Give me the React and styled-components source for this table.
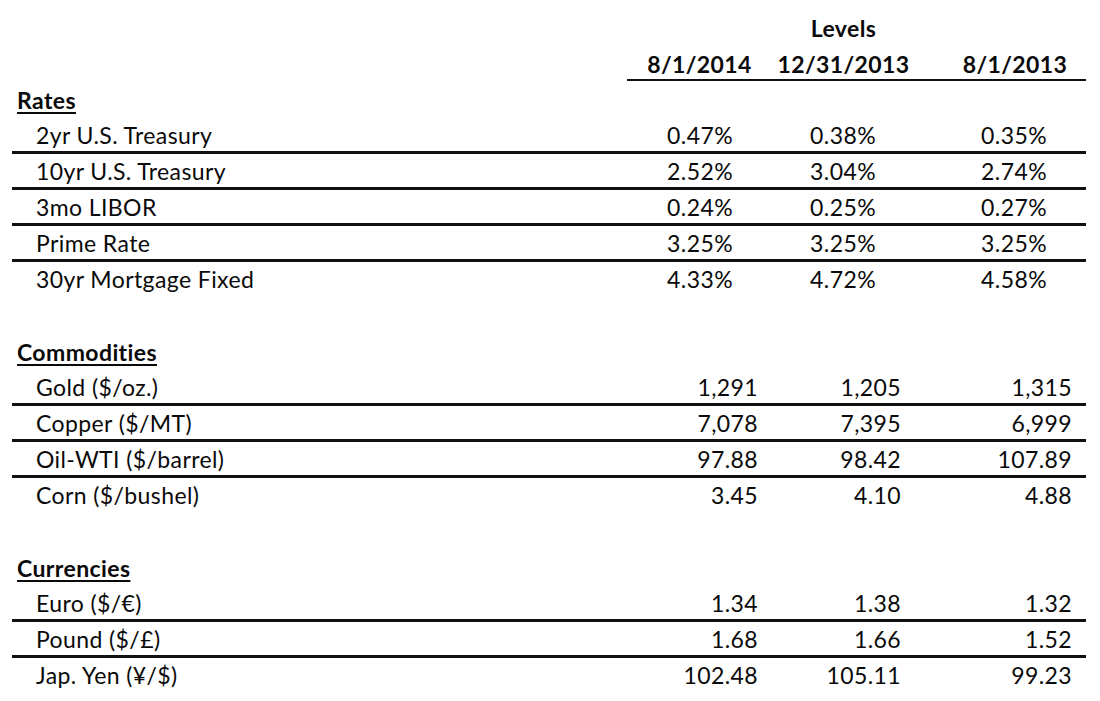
import React from "react";
import styled, { createGlobalStyle } from "styled-components";

const GlobalStyle = createGlobalStyle`
  html, body {
    margin: 0;
    padding: 0;
    background: #fff;
  }
  body {
    font-family: Lato, "Open Sans", "Liberation Sans", sans-serif;
    color: #0a0a0a;
  }
`;

const COLS = "615px 145px 143px 171px";

const Sheet = styled.div`
  width: 1074px;
  padding: 10px 0 0 12px;
  font-size: 23px;
  letter-spacing: 0.4px;
`;

const Head = styled.div`
  display: grid;
  grid-template-columns: ${COLS};
  margin-bottom: 1px;
`;

const LevelsCell = styled.div`
  grid-column: 3;
  height: 36px;
  line-height: 36px;
  text-align: center;
  font-weight: 700;
`;

const DateRow = styled.div`
  grid-column: 2 / 5;
  display: grid;
  grid-template-columns: 145px 143px 171px;
  border-bottom: 2px solid #111;
  height: 35px;
  box-sizing: border-box;
  padding-top: 3px;
`;

const DateCell = styled.div`
  line-height: 30px;
  text-align: center;
  font-weight: 700;
  padding-left: ${(p) => p.$shift || 0}px;
`;

const Row = styled.div`
  display: grid;
  grid-template-columns: ${COLS};
  height: 36px;
  box-sizing: border-box;
  border-bottom: ${(p) => (p.$line ? "3px solid #111" : "3px solid transparent")};
  line-height: 33px;
  padding-top: 1px;
`;

const SectionTitle = styled.div`
  height: 36px;
  line-height: 36px;
  padding-left: 5px;
  font-weight: 700;
  text-decoration: underline;
  text-decoration-thickness: 2px;
  text-underline-offset: 3px;
`;

const Spacer = styled.div`
  height: 36px;
`;

const Label = styled.div`
  padding-left: 24px;
  white-space: nowrap;
`;

const Value = styled.div`
  text-align: right;
  padding-right: ${(p) => (p.$pct ? 39 : 14)}px;
`;

const sections = [
  {
    title: "Rates",
    pct: true,
    rows: [
      ["2yr U.S. Treasury", "0.47%", "0.38%", "0.35%"],
      ["10yr U.S. Treasury", "2.52%", "3.04%", "2.74%"],
      ["3mo LIBOR", "0.24%", "0.25%", "0.27%"],
      ["Prime Rate", "3.25%", "3.25%", "3.25%"],
      ["30yr Mortgage Fixed", "4.33%", "4.72%", "4.58%"],
    ],
  },
  {
    title: "Commodities",
    rows: [
      ["Gold ($/oz.)", "1,291", "1,205", "1,315"],
      ["Copper ($/MT)", "7,078", "7,395", "6,999"],
      ["Oil-WTI ($/barrel)", "97.88", "98.42", "107.89"],
      ["Corn ($/bushel)", "3.45", "4.10", "4.88"],
    ],
  },
  {
    title: "Currencies",
    rows: [
      ["Euro ($/€)", "1.34", "1.38", "1.32"],
      ["Pound ($/£)", "1.68", "1.66", "1.52"],
      ["Jap. Yen (¥/$)", "102.48", "105.11", "99.23"],
    ],
  },
];

export default function App() {
  return (
    <>
      <GlobalStyle />
      <Sheet>
        <Head>
          <LevelsCell>Levels</LevelsCell>
          <DateRow>
            <DateCell>8/1/2014</DateCell>
            <DateCell>12/31/2013</DateCell>
            <DateCell $shift={29}>8/1/2013</DateCell>
          </DateRow>
        </Head>
        {sections.map((s, si) => (
          <React.Fragment key={s.title}>
            {si > 0 && <Spacer />}
            <SectionTitle>{s.title}</SectionTitle>
            {s.rows.map((r, i) => (
              <Row key={r[0]} $line={i < s.rows.length - 1}>
                <Label>{r[0]}</Label>
                <Value $pct={s.pct}>{r[1]}</Value>
                <Value $pct={s.pct}>{r[2]}</Value>
                <Value $pct={s.pct}>{r[3]}</Value>
              </Row>
            ))}
          </React.Fragment>
        ))}
      </Sheet>
    </>
  );
}
